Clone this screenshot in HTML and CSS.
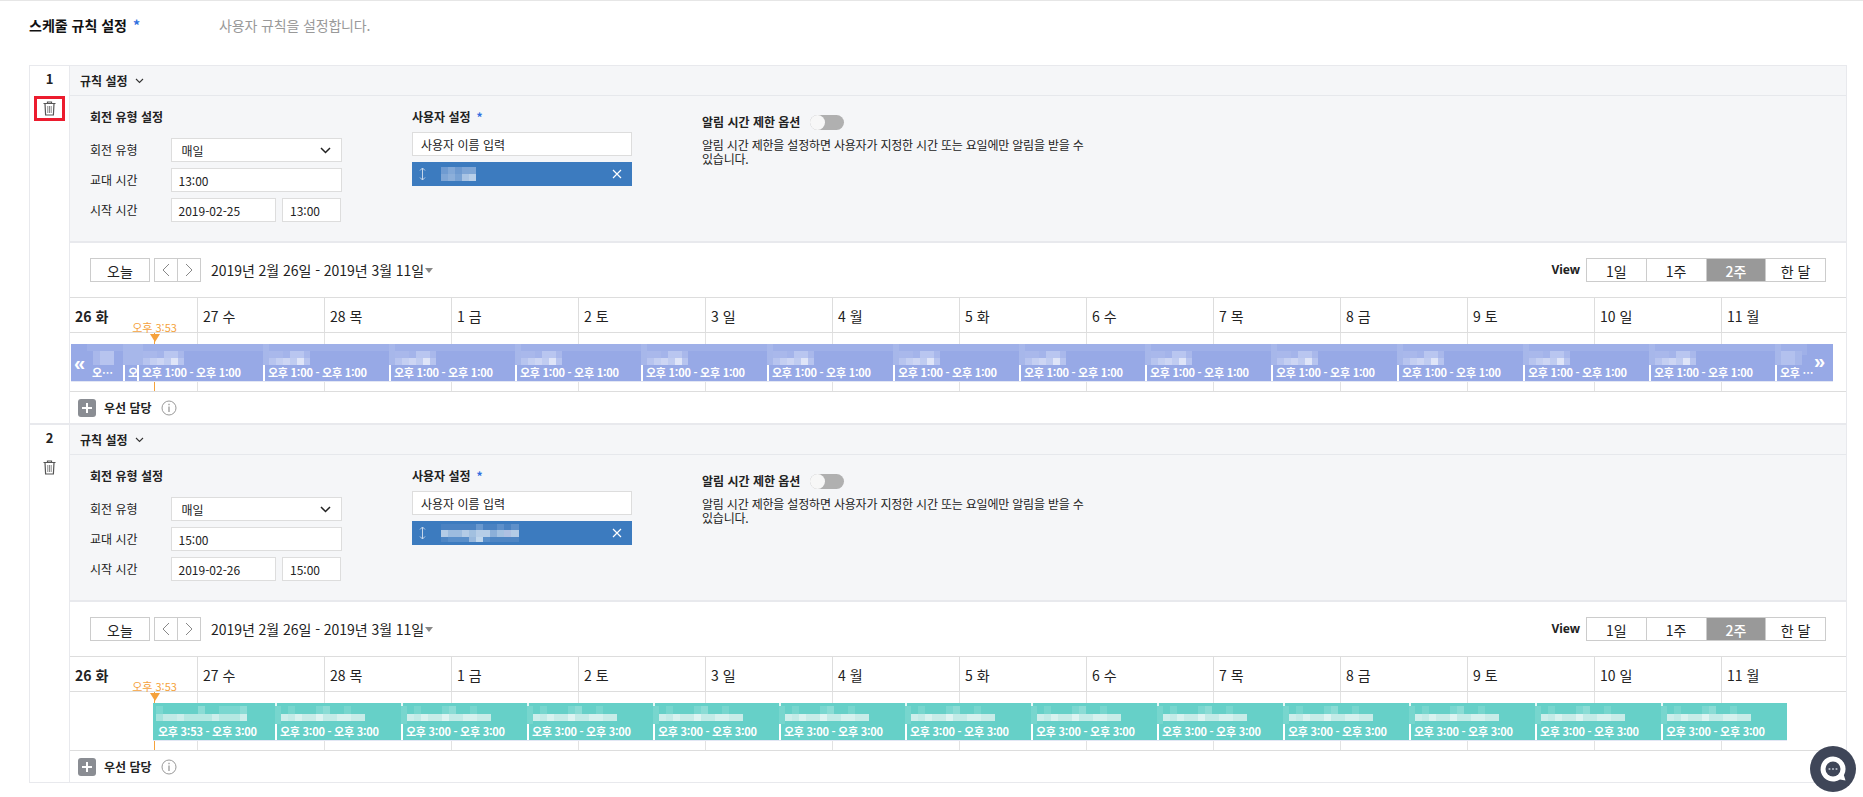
FILE: index.html
```html
<!DOCTYPE html>
<html lang="ko">
<head>
<meta charset="utf-8">
<title>스케줄 규칙 설정</title>
<link rel="stylesheet" href="styles.css">
</head>
<body>
<div class="page">
  <div class="title-row">
    <span class="page-title">스케줄 규칙 설정<span class="star">*</span></span>
    <span class="page-desc">사용자 규칙을 설정합니다.</span>
  </div>
  <div class="box">

    <section class="rule">
      <div class="side">
        <div class="num">1</div>
        <div class="trash marked"><svg width="13" height="15" viewBox="0 0 13 15"><path d="M4.500 2.500V1h4v1.500M0.500 2.500h12M2 2.500l.6 11.500h7.800l.6-11.500" fill="none" stroke="#555" stroke-width="1.200"/><path d="M4.800 5v7M6.500 5v7M8.200 5v7" fill="none" stroke="#888" stroke-width="1"/></svg></div>
      </div>
      <div class="main">
        <div class="rule-head">규칙 설정<svg class="chev" width="9" height="6" viewBox="0 0 9 6"><path d="M1 1l3.5 3.5L8 1" fill="none" stroke="#333" stroke-width="1.1"/></svg></div>
        <div class="settings">
          <div class="col-type">
            <div class="sec-title">회전 유형 설정</div>
            <div class="form-row"><span class="lbl">회전 유형</span><div class="ctl sel">매일<svg width="11" height="7" viewBox="0 0 11 7"><path d="M1 1l4.5 4.5L10 1" fill="none" stroke="#222" stroke-width="1.5"/></svg></div></div>
            <div class="form-row"><span class="lbl">교대 시간</span><div class="ctl wide">13:00</div></div>
            <div class="form-row"><span class="lbl">시작 시간</span><div class="ctl date">2019-02-25</div><div class="ctl time">13:00</div></div>
          </div>
          <div class="col-user">
            <div class="sec-title user-title">사용자 설정<span class="star">*</span></div>
            <div class="ctl user-input">사용자 이름 입력</div>
            <div class="chip">
              <svg width="7" height="14" viewBox="0 0 7 14"><path d="M3.5 1v12M1 3.5L3.5 1 6 3.5M1 10.500L3.500 13 6 10.500" fill="none" stroke="#c5d6ea" stroke-width="1"/></svg>
              <span class="chip-name short"></span>
              <svg class="chip-x" width="10" height="10" viewBox="0 0 10 10"><path d="M1 1l8 8M9 1l-8 8" stroke="#fff" stroke-width="1.200"/></svg>
            </div>
          </div>
          <div class="col-alert">
            <div class="alert-head"><span>알림 시간 제한 옵션</span><span class="toggle"><span class="knob"></span></span></div>
            <p class="alert-text">알림 시간 제한을 설정하면 사용자가 지정한 시간 또는 요일에만 알림을 받을 수 있습니다.</p>
          </div>
        </div>
        <div class="toolbar">
          <div class="btn today">오늘</div>
          <div class="pager"><span><svg width="8" height="14" viewBox="0 0 8 14"><path d="M7 1L1 7l6 6" fill="none" stroke="#888" stroke-width="1"/></svg></span><span><svg width="8" height="14" viewBox="0 0 8 14"><path d="M1 1l6 6-6 6" fill="none" stroke="#888" stroke-width="1"/></svg></span></div>
          <div class="range">2019년 2월 26일 - 2019년 3월 11일</div><span class="caret"></span>
          <div class="view-label">View</div>
          <div class="views"><span>1일</span><span>1주</span><span class="on">2주</span><span>한 달</span></div>
        </div>
        <div class="days">
          <div class="day strong">26 화</div><div class="day">27 수</div><div class="day">28 목</div><div class="day">1 금</div><div class="day">2 토</div><div class="day">3 일</div><div class="day">4 월</div><div class="day">5 화</div><div class="day">6 수</div><div class="day">7 목</div><div class="day">8 금</div><div class="day">9 토</div><div class="day">10 일</div><div class="day">11 월</div>
        </div>
        <div class="timeline">
          <div class="tcell"></div><div class="tcell"></div><div class="tcell"></div><div class="tcell"></div><div class="tcell"></div><div class="tcell"></div><div class="tcell"></div><div class="tcell"></div><div class="tcell"></div><div class="tcell"></div><div class="tcell"></div><div class="tcell"></div><div class="tcell"></div><div class="tcell"></div>
          <div class="now-line"></div>
          <div class="now"><span class="now-text">오후 3:53</span><span class="now-tri"></span></div>
          <div class="bar blue">
            <div class="seg seg-a"><div class="name name-a"></div><div class="label">오후 1:00 - 오후 1:00</div></div>
            <div class="seg seg-b"><div class="name name-b"></div><div class="label">오후 1:00 - 오후 1:00</div></div>
            <div class="seg"><div class="name"></div><div class="label">오후 1:00 - 오후 1:00</div></div>
            <div class="seg"><div class="name"></div><div class="label">오후 1:00 - 오후 1:00</div></div>
            <div class="seg"><div class="name"></div><div class="label">오후 1:00 - 오후 1:00</div></div>
            <div class="seg"><div class="name"></div><div class="label">오후 1:00 - 오후 1:00</div></div>
            <div class="seg"><div class="name"></div><div class="label">오후 1:00 - 오후 1:00</div></div>
            <div class="seg"><div class="name"></div><div class="label">오후 1:00 - 오후 1:00</div></div>
            <div class="seg"><div class="name"></div><div class="label">오후 1:00 - 오후 1:00</div></div>
            <div class="seg"><div class="name"></div><div class="label">오후 1:00 - 오후 1:00</div></div>
            <div class="seg"><div class="name"></div><div class="label">오후 1:00 - 오후 1:00</div></div>
            <div class="seg"><div class="name"></div><div class="label">오후 1:00 - 오후 1:00</div></div>
            <div class="seg"><div class="name"></div><div class="label">오후 1:00 - 오후 1:00</div></div>
            <div class="seg"><div class="name"></div><div class="label">오후 1:00 - 오후 1:00</div></div>
            <div class="seg"><div class="name"></div><div class="label">오후 1:00 - 오후 1:00</div></div>
            <div class="seg seg-last"><div class="name name-last"></div><div class="label">오후 1:00 - 오후 1:00</div></div>
            <span class="more more-l">«</span><span class="more more-r">»</span>
          </div>
        </div>
        <div class="foot">
          <span class="plus"><svg width="10" height="10" viewBox="0 0 10 10"><path d="M5 0v10M0 5h10" stroke="#fff" stroke-width="2"/></svg></span>
          <span class="foot-text">우선 담당</span>
          <svg class="info" width="16" height="16" viewBox="0 0 16 16"><circle cx="8" cy="8" r="7" fill="none" stroke="#999" stroke-width="1"/><path d="M8 6.500v5.500M8 3.800v1.500" stroke="#999" stroke-width="1.300"/></svg>
        </div>
      </div>
    </section>

    <section class="rule">
      <div class="side">
        <div class="num">2</div>
        <div class="trash"><svg width="13" height="15" viewBox="0 0 13 15"><path d="M4.500 2.500V1h4v1.500M0.500 2.500h12M2 2.500l.6 11.500h7.800l.6-11.500" fill="none" stroke="#555" stroke-width="1.200"/><path d="M4.800 5v7M6.500 5v7M8.200 5v7" fill="none" stroke="#888" stroke-width="1"/></svg></div>
      </div>
      <div class="main">
        <div class="rule-head">규칙 설정<svg class="chev" width="9" height="6" viewBox="0 0 9 6"><path d="M1 1l3.5 3.5L8 1" fill="none" stroke="#333" stroke-width="1.1"/></svg></div>
        <div class="settings">
          <div class="col-type">
            <div class="sec-title">회전 유형 설정</div>
            <div class="form-row"><span class="lbl">회전 유형</span><div class="ctl sel">매일<svg width="11" height="7" viewBox="0 0 11 7"><path d="M1 1l4.5 4.5L10 1" fill="none" stroke="#222" stroke-width="1.5"/></svg></div></div>
            <div class="form-row"><span class="lbl">교대 시간</span><div class="ctl wide">15:00</div></div>
            <div class="form-row"><span class="lbl">시작 시간</span><div class="ctl date">2019-02-26</div><div class="ctl time">15:00</div></div>
          </div>
          <div class="col-user">
            <div class="sec-title user-title">사용자 설정<span class="star">*</span></div>
            <div class="ctl user-input">사용자 이름 입력</div>
            <div class="chip">
              <svg width="7" height="14" viewBox="0 0 7 14"><path d="M3.5 1v12M1 3.5L3.5 1 6 3.5M1 10.500L3.500 13 6 10.500" fill="none" stroke="#c5d6ea" stroke-width="1"/></svg>
              <span class="chip-name long"></span>
              <svg class="chip-x" width="10" height="10" viewBox="0 0 10 10"><path d="M1 1l8 8M9 1l-8 8" stroke="#fff" stroke-width="1.200"/></svg>
            </div>
          </div>
          <div class="col-alert">
            <div class="alert-head"><span>알림 시간 제한 옵션</span><span class="toggle"><span class="knob"></span></span></div>
            <p class="alert-text">알림 시간 제한을 설정하면 사용자가 지정한 시간 또는 요일에만 알림을 받을 수 있습니다.</p>
          </div>
        </div>
        <div class="toolbar">
          <div class="btn today">오늘</div>
          <div class="pager"><span><svg width="8" height="14" viewBox="0 0 8 14"><path d="M7 1L1 7l6 6" fill="none" stroke="#888" stroke-width="1"/></svg></span><span><svg width="8" height="14" viewBox="0 0 8 14"><path d="M1 1l6 6-6 6" fill="none" stroke="#888" stroke-width="1"/></svg></span></div>
          <div class="range">2019년 2월 26일 - 2019년 3월 11일</div><span class="caret"></span>
          <div class="view-label">View</div>
          <div class="views"><span>1일</span><span>1주</span><span class="on">2주</span><span>한 달</span></div>
        </div>
        <div class="days">
          <div class="day strong">26 화</div><div class="day">27 수</div><div class="day">28 목</div><div class="day">1 금</div><div class="day">2 토</div><div class="day">3 일</div><div class="day">4 월</div><div class="day">5 화</div><div class="day">6 수</div><div class="day">7 목</div><div class="day">8 금</div><div class="day">9 토</div><div class="day">10 일</div><div class="day">11 월</div>
        </div>
        <div class="timeline">
          <div class="tcell"></div><div class="tcell"></div><div class="tcell"></div><div class="tcell"></div><div class="tcell"></div><div class="tcell"></div><div class="tcell"></div><div class="tcell"></div><div class="tcell"></div><div class="tcell"></div><div class="tcell"></div><div class="tcell"></div><div class="tcell"></div><div class="tcell"></div>
          <div class="now-line"></div>
          <div class="now"><span class="now-text">오후 3:53</span><span class="now-tri"></span></div>
          <div class="bar teal">
            <div class="seg seg-first"><div class="name"></div><div class="label">오후 3:53 - 오후 3:00</div></div>
            <div class="seg"><div class="name"></div><div class="label">오후 3:00 - 오후 3:00</div></div>
            <div class="seg"><div class="name"></div><div class="label">오후 3:00 - 오후 3:00</div></div>
            <div class="seg"><div class="name"></div><div class="label">오후 3:00 - 오후 3:00</div></div>
            <div class="seg"><div class="name"></div><div class="label">오후 3:00 - 오후 3:00</div></div>
            <div class="seg"><div class="name"></div><div class="label">오후 3:00 - 오후 3:00</div></div>
            <div class="seg"><div class="name"></div><div class="label">오후 3:00 - 오후 3:00</div></div>
            <div class="seg"><div class="name"></div><div class="label">오후 3:00 - 오후 3:00</div></div>
            <div class="seg"><div class="name"></div><div class="label">오후 3:00 - 오후 3:00</div></div>
            <div class="seg"><div class="name"></div><div class="label">오후 3:00 - 오후 3:00</div></div>
            <div class="seg"><div class="name"></div><div class="label">오후 3:00 - 오후 3:00</div></div>
            <div class="seg"><div class="name"></div><div class="label">오후 3:00 - 오후 3:00</div></div>
            <div class="seg"><div class="name"></div><div class="label">오후 3:00 - 오후 3:00</div></div>
          </div>
        </div>
        <div class="foot">
          <span class="plus"><svg width="10" height="10" viewBox="0 0 10 10"><path d="M5 0v10M0 5h10" stroke="#fff" stroke-width="2"/></svg></span>
          <span class="foot-text">우선 담당</span>
          <svg class="info" width="16" height="16" viewBox="0 0 16 16"><circle cx="8" cy="8" r="7" fill="none" stroke="#999" stroke-width="1"/><path d="M8 6.500v5.500M8 3.800v1.500" stroke="#999" stroke-width="1.300"/></svg>
        </div>
      </div>
    </section>

  </div>
</div>
<div class="chat">
  <svg width="46" height="46" viewBox="0 0 46 46"><path d="M23 10.500a12.500 12.500 0 1 0 7 22.900l5.500 1.100-1.600-5.300A12.500 12.500 0 0 0 23 10.500z" fill="#fff"/><circle cx="23" cy="23" r="7.500" fill="#3f4658"/><circle cx="19.500" cy="23" r="1.100" fill="#b4bac6"/><circle cx="23" cy="23" r="1.100" fill="#b4bac6"/><circle cx="26.500" cy="23" r="1.100" fill="#b4bac6"/></svg>
</div>
</body>
</html>
```
FILE: styles.css
```css
* { box-sizing: border-box; }
html, body { margin: 0; padding: 0; }
body {
  font-family: "Noto Sans CJK KR", "Noto Sans", sans-serif;
  font-size: 12px;
  line-height: 16px;
  color: #222;
  background: #fff;
  overflow: hidden;
}
.page {
  border-top: 1px solid #e6e6e6;
  height: 797px;
  padding: 0 16px 0 29px;
}
.title-row {
  display: flex;
  align-items: center;
  height: 48px;
  margin-bottom: 16px;
  font-size: 14px;
}
.page-title { width: 190px; font-weight: 700; color: #111; }
.page-desc { color: #999; letter-spacing: -0.15px; }
.star { color: #2f6fe0; font-weight: 700; margin-left: 6px; }

.box { border: 1px solid #e8e9ed; width: 1818px; }
.rule { display: flex; border-bottom: 2px solid #e8e9ed; }
.rule:last-child { border-bottom: 0; }
.side {
  width: 40px;
  flex: none;
  border-right: 1px solid #e8e9ed;
  display: flex;
  flex-direction: column;
  align-items: center;
  padding-top: 5px;
}
.num { font-size: 13px; font-weight: 700; height: 16px; line-height: 16px; margin-bottom: 9px; }
.trash {
  width: 31px;
  height: 25px;
  border: 3px solid transparent;
  display: flex;
  align-items: center;
  justify-content: center;
}
.trash.marked { border-color: #ec1c2e; }
.main { flex: 1; min-width: 0; }

.rule-head {
  height: 30px;
  display: flex;
  align-items: center;
  padding-left: 10px;
  background: #f5f6f8;
  border-bottom: 1px solid #e6e8ec;
  font-weight: 700;
}
.chev { margin-left: 7px; }

.settings {
  height: 147px;
  display: flex;
  gap: 70px;
  padding: 11px 0 0 20px;
  background: #f5f6f8;
  border-bottom: 2px solid #e8e9ed;
}
.col-type { width: 252px; }
.sec-title { font-weight: 700; height: 20px; line-height: 20px; margin-bottom: 11px; }
.form-row { display: flex; align-items: center; gap: 6.500px; margin-bottom: 6px; }
.form-row .lbl { width: 74px; }
.ctl {
  height: 24px;
  line-height: 21px;
  background: #fff;
  border: 1px solid #ddd;
  padding: 0 7px;
  display: flex;
  align-items: center;
}
.sel { width: 171px; padding-left: 10px; justify-content: space-between; padding-right: 10px; }
.wide { width: 171px; }
.date { width: 105px; }
.time { width: 59px; }
.col-user { width: 220px; }
.user-title { margin-bottom: 5px; }
.user-title .star { margin-left: 6px; }
.user-input { padding-left: 8px; margin-bottom: 6px; }
.chip {
  height: 24px;
  background: #3c7bbf;
  display: flex;
  align-items: center;
  padding: 0 10px 0 7px;
}
.chip-name { height: 18px; margin-left: 15px; }
.chip-name.short {
  width: 35px;
  height: 14px;
  background:
    linear-gradient(90deg, #7fa6d6 0 7px, #8cafda 7px 14px, #78a2d4 14px 21px, #a9c4e4 21px 28px, #b8cfe9 28px 35px) 0 7px/35px 7px no-repeat,
    linear-gradient(90deg, #6f9bd1 0 7px, #82a8d7 7px 14px, #6e9ad0 14px 21px, #7fa6d6 21px 28px, #80a7d6 28px 35px) 0 0/35px 7px no-repeat;
}
.chip-name.long {
  width: 78px;
  background:
    linear-gradient(90deg, #4f86c4 0 7px, #5a8fca 7px 28px, #98b8dd 28px 35px, #c0d6ec 35px 42px, #5a8fca 42px 49px, #4f86c4 49px 78px) 0 13px/78px 5px no-repeat,
    linear-gradient(90deg, #b3cbe6 0 7px, #9dbcdf 7px 21px, #b3cbe6 21px 28px, #a2c0e0 28px 35px, #b6cde7 35px 49px, #8cafd8 49px 56px, #a4c1e1 56px 63px, #aec0e2 63px 70px, #b3cbe6 70px 78px) 0 6px/78px 7px no-repeat,
    linear-gradient(90deg, #4a82c2 0 35px, #6a99cf 35px 42px, #4a82c2 42px 56px, #5e90ca 56px 63px, #4a82c2 63px 70px, #5e90ca 70px 78px) 0 0/78px 6px no-repeat;
}
.chip-x { margin-left: auto; }
.col-alert { width: 384px; padding-top: 5px; }
.alert-head { display: flex; align-items: center; gap: 10px; height: 20px; font-weight: 700; }
.toggle { width: 34px; height: 15px; border-radius: 8px; background: #b0b0b0; display: flex; }
.knob { width: 15px; height: 15px; border-radius: 50%; background: #f7f7f7; }
.alert-text { margin: 6px 0 0; line-height: 14px; letter-spacing: -0.2px; }

.toolbar {
  height: 54px;
  display: flex;
  align-items: center;
  padding: 0 20px;
  font-size: 14px;
}
.btn {
  height: 24px;
  line-height: 24px;
  border: 1px solid #ccc;
  text-align: center;
}
.today { width: 60px; }
.pager {
  width: 47px;
  height: 24px;
  margin-left: 4px;
  border: 1px solid #ccc;
  display: flex;
}
.pager span { flex: 1; display: flex; align-items: center; justify-content: center; }
.pager span + span { border-left: 1px solid #ccc; }
.range { margin-left: 10px; letter-spacing: -0.05px; }
.caret {
  margin-left: 1px;
  border-left: 4.500px solid transparent;
  border-right: 4.500px solid transparent;
  border-top: 5px solid #888;
}
.view-label { margin-left: auto; font-size: 12px; font-weight: 700; font-family: "Noto Sans", sans-serif; margin-right: 6px; }
.views { display: flex; width: 240px; height: 24px; border: 1px solid #ccc; }
.views span { flex: 1; text-align: center; line-height: 24px; border-left: 1px solid #ccc; }
.views span:first-child { border-left: 0; }
.views .on { background: #999; color: #fff; font-weight: 500; }

.days, .timeline { display: grid; grid-template-columns: repeat(13, 127px) 1fr; }
.days {
  height: 36px;
  border-top: 1px solid #ddd;
  border-bottom: 1px solid #ddd;
  font-size: 14px;
}
.day { padding: 4px 0 0 5px; line-height: 28px; border-left: 1px solid #ddd; }
.day:first-child { border-left: 0; }
.day.strong { font-weight: 700; }
.timeline { height: 59px; position: relative; border-bottom: 1px solid #ddd; }
.tcell { border-left: 1px solid #e2e2e2; }
.tcell:first-child { border-left: 0; }
.now-line { position: absolute; left: 84px; top: 0; bottom: 0; width: 1px; background: #f5a23c; }
.now {
  position: absolute;
  left: 54.500px;
  top: -13px;
  width: 60px;
  display: flex;
  flex-direction: column;
  align-items: center;
}
.now-text { font-size: 11px; line-height: 14px; color: #f5a23c; }
.now-tri {
  border-left: 5px solid transparent;
  border-right: 5px solid transparent;
  border-top: 8px solid #f5a23c;
}
.bar {
  position: absolute;
  top: 11px;
  height: 38px;
  display: flex;
  overflow: hidden;
  color: #fff;
  border-bottom: 1px solid #e3e7f4;
}
.bar.blue { left: 1px; width: 1762px; background: #97a9e6; }
.bar.teal { left: 83px; width: 1634px; background: #66d0c8; }
.seg { width: 126px; flex: none; }
.label {
  font-size: 11px;
  font-weight: 700;
  line-height: 14px;
  height: 16px;
  border-left: 2px solid #fff;
  padding-left: 3px;
  white-space: nowrap;
  overflow: hidden;
  text-overflow: ellipsis;
  letter-spacing: -0.25px;
}
.blue .name {
  height: 21px;
  background:
    linear-gradient(90deg, #b7c4ef 0 7px, #c4cff2 7px 14px, #cdd6f4 14px 21px, #c0ccf1 21px 28px, #dfe5f8 28px 35px, #b7c4ef 35px 41px) 6px 14px/41px 7px no-repeat,
    linear-gradient(90deg, #a9b8eb 0 14px, #a4b4ea 14px 21px, #b9c6f0 21px 35px, #a9b8eb 35px 41px) 6px 7px/41px 7px no-repeat,
    linear-gradient(180deg, #a7b7ea 0 21px) 0 0/6px 21px no-repeat,
    linear-gradient(180deg, #9fb0e8 0 7px) 0 0/100% 7px no-repeat;
}
.seg-a { width: 52px; }
.seg-a .label { border-left: 0; padding: 0 8px 0 21px; }
.blue .name-a {
  background:
    linear-gradient(90deg, #a9b8eb 0 7px, #b7c4ef 7px 21px) 22px 7px/21px 14px no-repeat,
    linear-gradient(180deg, #9fb0e8 0 7px) 16px 0/100% 7px no-repeat;
}
.seg-b { width: 14px; }
.seg-b .label { text-overflow: clip; }
.blue .name-b { background: #a7b7ea; }
.seg-last { width: 58px; }
.blue .name-last {
  background:
    linear-gradient(90deg, #b3c1ee 0 14px, #a7b7ea 14px 21px) 6px 7px/21px 14px no-repeat,
    linear-gradient(180deg, #a7b7ea 0 21px) 0 0/6px 21px no-repeat,
    linear-gradient(180deg, #9fb0e8 0 11px) 0 0/32px 11px no-repeat;
}
.seg-last .label { width: 40px; }
.more { position: absolute; font-size: 20px; line-height: 20px; font-weight: 700; font-family: "Liberation Sans", sans-serif; }
.more-l { left: 3px; top: 9px; }
.more-r { right: 8px; top: 7px; }

.teal .seg-first { width: 122px; }
.teal .seg-first .label { border-left: 0; padding-left: 5px; }
.teal .seg-first .name {
  background:
    linear-gradient(90deg, #a4e3dd 0 7px, #c0eae6 7px 21px, #cdeeeb 21px 28px, #b5e8e2 28px 56px, #cdeeeb 56px 63px, #b5e8e2 63px 84px, #cdeeeb 84px 91px) 3px 11px/91px 7px no-repeat,
    linear-gradient(90deg, #7ad7d0 0 7px, #66d0c8 7px 42px, #8bdcd5 42px 49px, #66d0c8 49px 63px, #7ad7d0 63px 84px, #8bdcd5 84px 91px) 3px 3px/91px 8px no-repeat;
}
.teal .name {
  height: 21px;
  background:
    linear-gradient(90deg, #cdeeeb 0 7px, #c2ebe7 7px 14px, #d8f2ef 14px 21px, #c7ece8 21px 35px, #def4f2 35px 42px, #c2ebe7 42px 56px, #d5f1ee 56px 70px, #c7ece8 70px 84px) 6px 11px/84px 7px no-repeat,
    linear-gradient(90deg, #66d0c8 0 7px, #77d6ce 7px 14px, #66d0c8 14px 35px, #7ad7d0 35px 42px, #8bdcd5 42px 49px, #66d0c8 49px 63px, #77d6ce 63px 70px, #66d0c8 70px 84px) 6px 3px/84px 8px no-repeat,
    linear-gradient(90deg, #77d6ce 0 6px) 0 3px/6px 18px no-repeat,
    linear-gradient(90deg, #e6f7f5 0 2px) 0 0/2px 3px no-repeat;
}
.foot { height: 31px; display: flex; align-items: center; padding-left: 8px; }
.plus {
  width: 18px;
  height: 18px;
  border-radius: 3px;
  background: #8a8d93;
  display: flex;
  align-items: center;
  justify-content: center;
}
.foot-text { margin-left: 8px; font-weight: 700; }
.info { margin-left: 9px; }

.chat {
  position: fixed;
  left: 1810px;
  top: 746px;
  width: 46px;
  height: 46px;
  border-radius: 50%;
  background: #3f4658;
}
```
